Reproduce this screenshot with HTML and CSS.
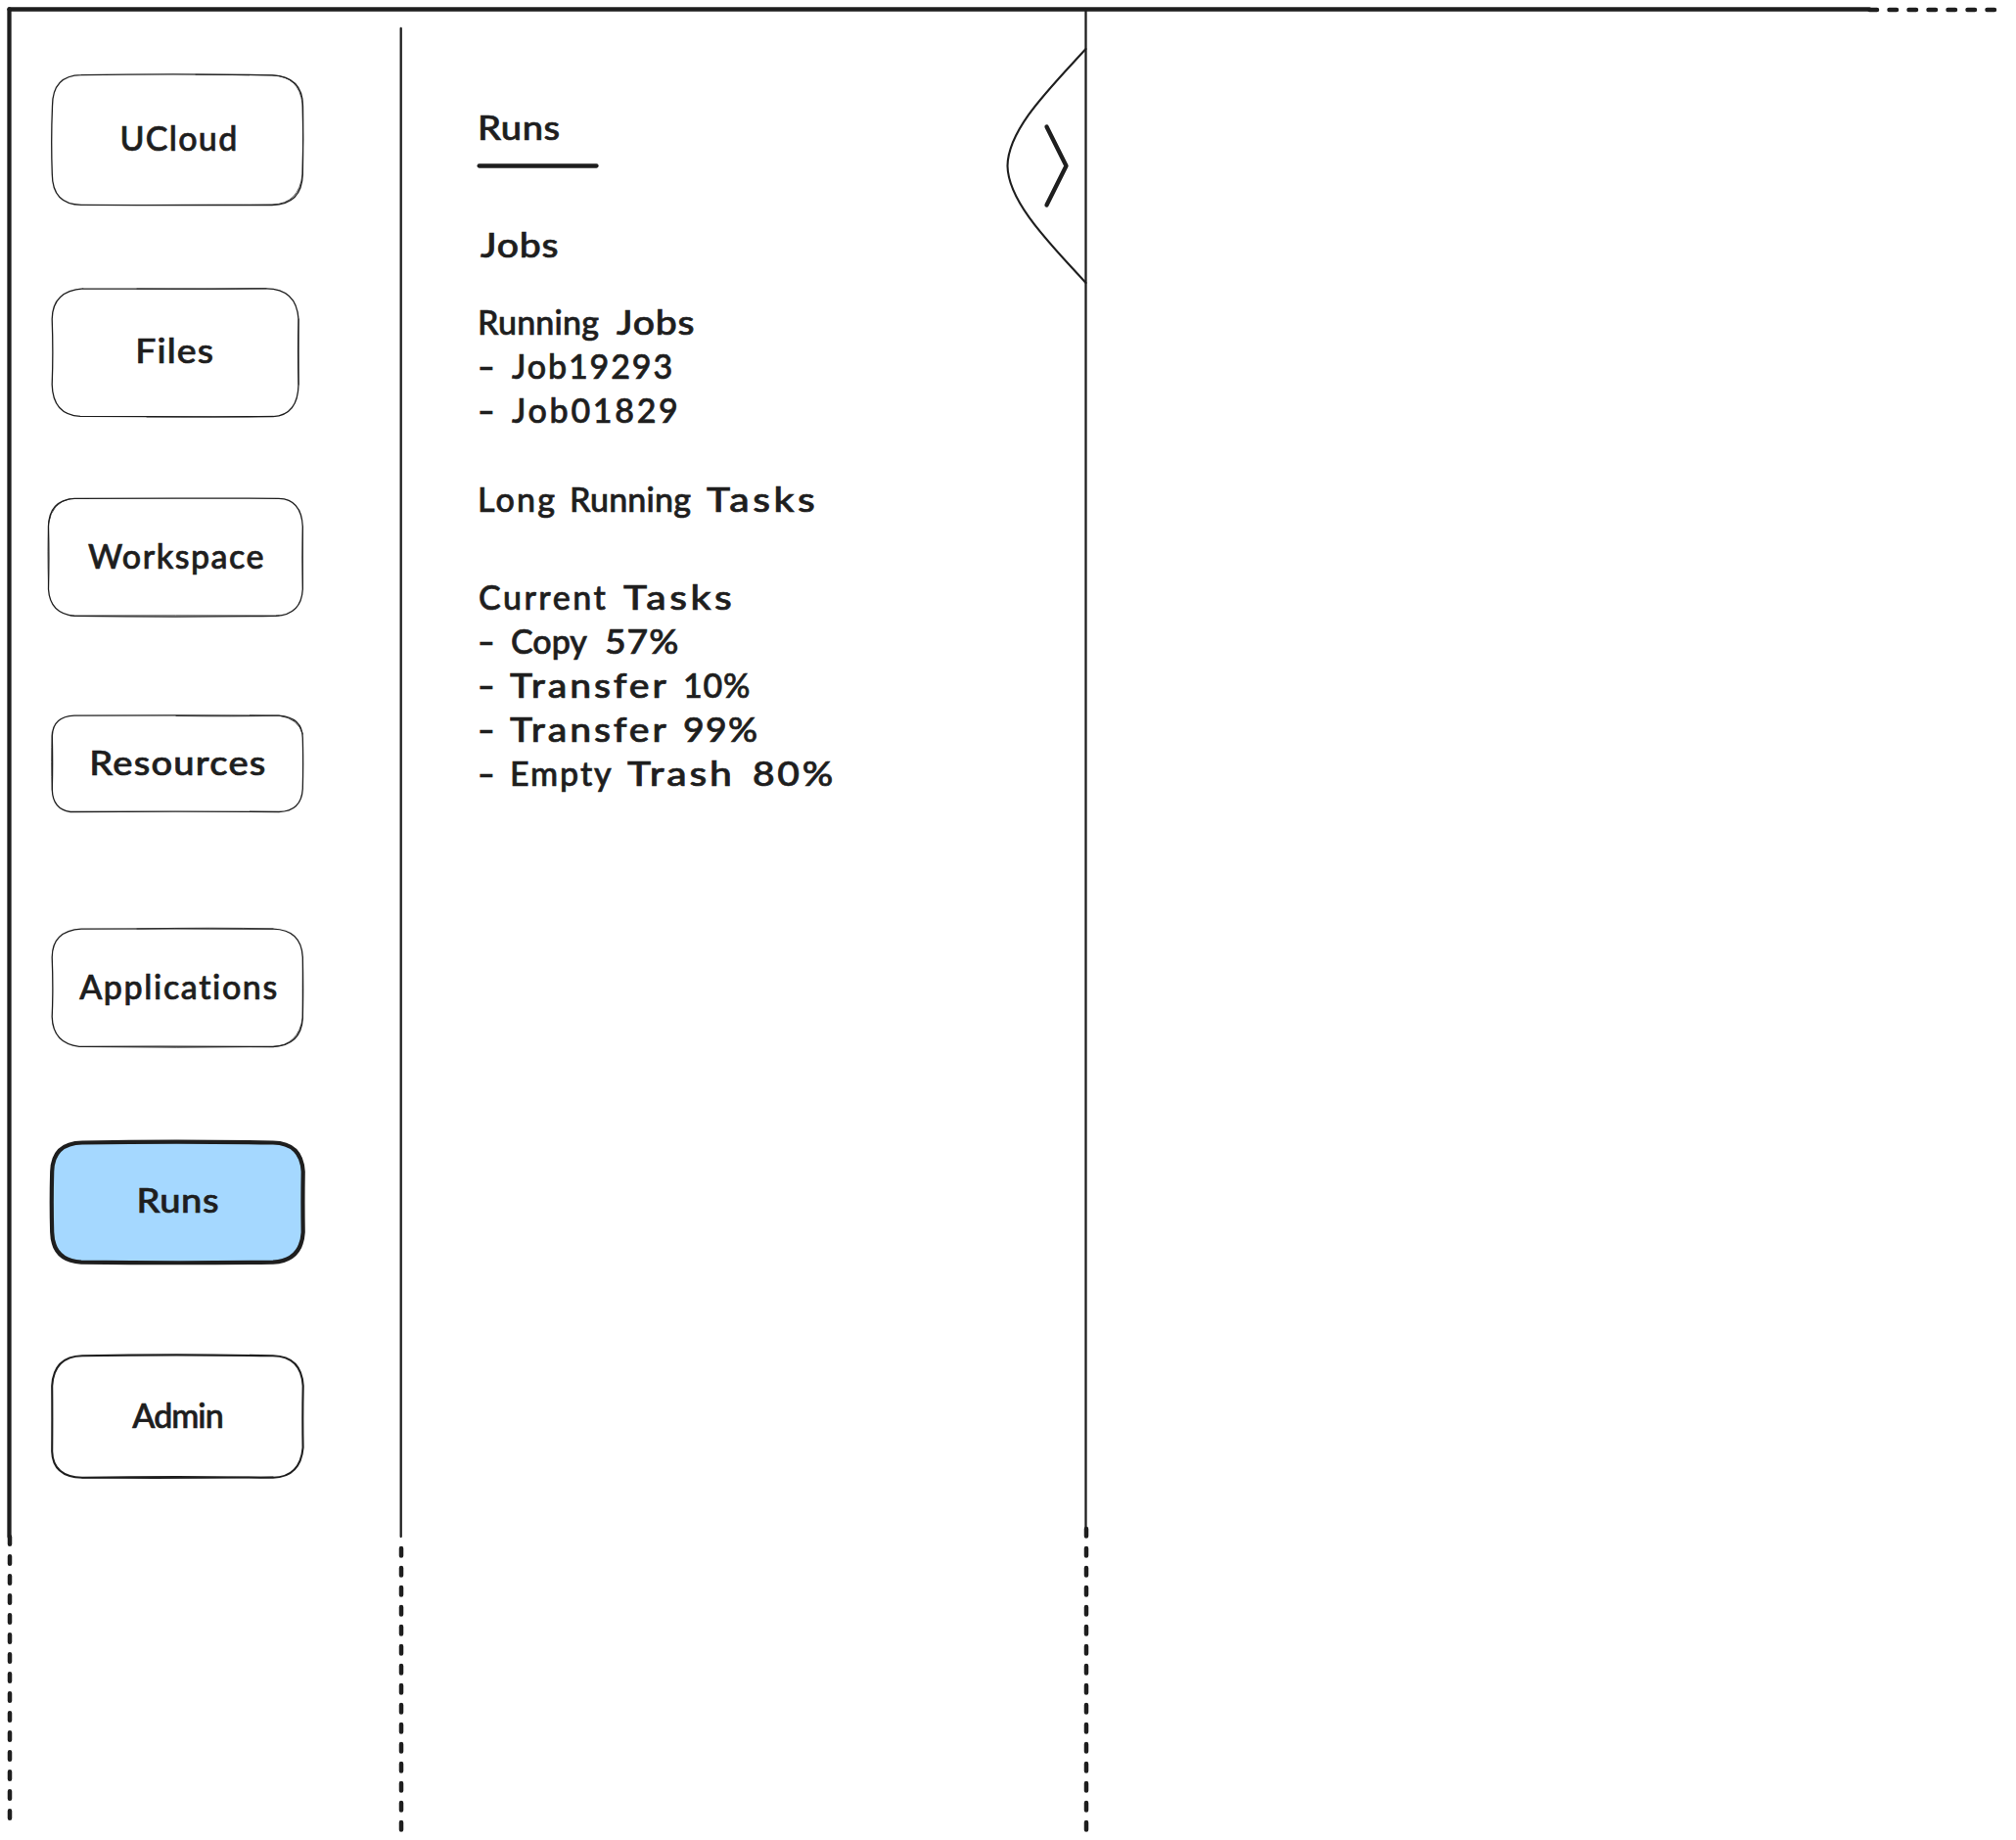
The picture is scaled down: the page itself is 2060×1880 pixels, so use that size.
FILE: index.html
```html
<!DOCTYPE html>
<html lang="en">
<head>
<meta charset="utf-8">
<title>UCloud – Runs</title>
<link rel="stylesheet" href="styles.css">
</head>
<body>
<div class="board">
  <svg class="top-edge ink" viewBox="0 0 2060 14" aria-hidden="true">
    <path class="bold" d="M9.5 9.5H1910"/>
    <path class="dashed" d="M1910.5 10H2040"/>
  </svg>
  <div class="columns">
    <svg class="left-edge ink" viewBox="0 14 14 1866" aria-hidden="true">
      <path class="bold" d="M9.5 9.5V1570"/>
      <path class="dashed" d="M10 1570.3V1860"/>
    </svg>

    <nav class="nav">
      <a class="item ucloud">
        <svg class="box ink" viewBox="53 76 257 134" aria-hidden="true">
          <path d="M83 76.7Q180 75.2 278 76.8Q309.5 78 309.5 108.500Q310 143 309.300 178Q308.500 209 278 209.500Q180 210 83 209.300Q53.500 209 53.300 178Q52 143 53.500 108.500Q53.500 77 83 76.700"/>
          <path class="echo" d="M200 76.200Q240 76.500 278 76.800Q306 78 309 106Q310.300 143 309 178Q306 208 278 209.200Q220 209 150 209.500"/>
        </svg>
        <span class="label">UCloud</span>
      </a>
      <a class="item files">
        <svg class="box ink" viewBox="53 294 252 132" aria-hidden="true">
          <path d="M85 294.800Q180 295.300 272 294.800Q303 295 305 326Q304.200 360 305 393Q304.500 424 279 425.700Q180 426 82 425.300Q54 424 53.200 393Q54.500 360 53.200 326Q53.500 297 85 294.800"/>
          <path class="echo" d="M140 295Q210 295.600 272 294.800M305.200 326V393M150 426Q220 426.300 279 425.300"/>
        </svg>
        <span class="label">Files</span>
      </a>
      <a class="item workspace">
        <svg class="box ink" viewBox="49 509 261 121" aria-hidden="true">
          <path d="M76 509.300Q180 508.800 285 509.300Q308 510 309.300 538Q309 570 309.300 602Q308 628 282 629.300Q180 630.800 76 629.300Q51 627 49.500 602Q50.300 570 49.500 538Q50 511 76 509.300"/>
          <path class="echo" d="M49.500 600Q48.500 560 49.500 535Q53 513 72 509.500M72 629Q180 628.700 285 629M309.500 538Q308.500 570 309.500 602"/>
        </svg>
        <span class="label">Workspace</span>
      </a>
      <a class="item resources">
        <svg class="box ink" viewBox="53 731 257 99" aria-hidden="true">
          <path d="M76 731.200Q180 730.500 285 731.200Q309 733 309.300 754Q310 780 309.300 806Q308 829 285 829.500Q180 828.600 72 829.500Q54 827 53.300 807Q54 780 53.300 752Q54 732 76 731.200"/>
          <path class="echo" d="M180 731.500Q240 732.300 285 731.200Q305 734 309.300 750M53.300 807Q51.900 780 53.300 748"/>
        </svg>
        <span class="label">Resources</span>
      </a>
      <a class="item applications">
        <svg class="box ink" viewBox="53 949 257 121" aria-hidden="true">
          <path d="M83 949.200Q180 948.500 279 949.200Q308 950 309.300 978Q310 1010 309.300 1040Q308 1068 279 1069.500Q180 1068.800 81 1069.300Q54 1066 53.200 1039Q54.500 1010 53.200 978Q53.500 951 83 949.200"/>
          <path class="echo" d="M140 949Q220 947.400 279 949M309.500 978Q309 1010 309.300 1040Q305 1068 279 1069.500Q180 1071 85 1069.500"/>
        </svg>
        <span class="label">Applications</span>
      </a>
      <a class="item runs active" aria-current="page">
        <svg class="box ink" viewBox="53 1166 258 125" aria-hidden="true">
          <path d="M84 1167.500Q180 1165.800 279 1167.500Q308 1168 309.700 1197Q309.200 1229 309.700 1259Q308 1288 279 1289.700Q180 1290.800 83 1289.600Q54 1288 53.200 1259Q52.300 1229 53.200 1197Q54 1168 84 1167.500Z"/>
        </svg>
        <span class="label">Runs</span>
      </a>
      <a class="item admin">
        <svg class="box ink" viewBox="53 1385 257 125" aria-hidden="true">
          <path d="M84 1385.300Q180 1383.500 279 1385.300Q308 1386 309.700 1416Q309 1448 309.600 1479Q307 1509 279 1509.800Q180 1508.300 84 1509.800Q54 1509 53.200 1483Q53.500 1448 53.200 1416Q55 1386 84 1385.300Z"/>
          <path class="echo" d="M84 1509.800Q180 1510.800 279 1509.200"/>
        </svg>
        <span class="label">Admin</span>
      </a>
    </nav>

    <svg class="divider ink" viewBox="404 14 12 1866" aria-hidden="true">
      <path d="M409.700 29V1570"/>
      <path class="dashed" d="M410 1582V1872"/>
    </svg>

    <main class="panel">
      <h1 class="line title"><span class="runs-word">Runs</span></h1>
      <svg class="underline ink" viewBox="488 166 126 6" aria-hidden="true"><path class="bold" d="M489.600 169.500H609.500"/></svg>

      <h2 class="line jobs"><span class="jobs-word">Jobs</span></h2>

      <section class="group running-jobs">
        <h3 class="line heading"><span class="running">Running</span><span class="jobs-word">Jobs</span></h3>
        <div class="line job"><span class="dash">-</span><span class="job-a">Job19293</span></div>
        <div class="line job"><span class="dash">-</span><span class="job-b">Job01829</span></div>
      </section>

      <h2 class="line long-tasks"><span class="long">Long</span><span class="running">Running</span><span class="tasks">Tasks</span></h2>

      <section class="group current-tasks">
        <h3 class="line heading"><span class="current">Current</span><span class="tasks">Tasks</span></h3>
        <div class="line copy"><span class="dash">-</span><span class="copy-word">Copy</span><span class="p57">57%</span></div>
        <div class="line transfer"><span class="dash">-</span><span class="transfer-word">Transfer</span><span class="p10">10%</span></div>
        <div class="line transfer"><span class="dash">-</span><span class="transfer-word">Transfer</span><span class="p99">99%</span></div>
        <div class="line empty"><span class="dash">-</span><span class="empty-word">Empty</span><span class="trash">Trash</span><span class="p80">80%</span></div>
      </section>
    </main>

    <svg class="handle ink" viewBox="1020 14 96 1866" aria-hidden="true">
      <path d="M1109.500 10V1570"/>
      <path class="dashed" d="M1110 1562V1872"/>
      <path class="thin" d="M1109.500 50C1072 91 1030 132 1029.500 169.500C1030 208 1078 254 1109.500 289"/>
      <path class="bold" d="M1069.500 129.500L1089.500 169.500L1069.500 209.500"/>
    </svg>
  </div>
</div>
</body>
</html>
```
FILE: styles.css
```css
* { box-sizing: border-box; }

body {
  margin: 0;
  background: #fff;
  color: #1e1e1e;
  font: 500 34px/45px Lato, "Open Sans", sans-serif;
  -webkit-text-stroke: .7px #1e1e1e;
}

.board {
  width: 2060px;
  height: 1880px;
  overflow: hidden;
}

svg { display: block; overflow: visible; flex: none; }

.ink {
  fill: none;
  stroke: #1e1e1e;
  stroke-width: 2.3;
  stroke-linecap: round;
  stroke-linejoin: round;
}
.ink .bold { stroke-width: 4.3; }
.ink .thin { stroke-width: 2.1; }
.ink .dashed { stroke-width: 4.5; stroke-dasharray: 7.5 12.5; }

.top-edge { width: 2060px; height: 14px; }
.columns { display: flex; height: 1866px; }
.left-edge { width: 14px; height: 1866px; }
.divider { width: 12px; height: 1866px; }
.handle { width: 96px; height: 1866px; }

/* Sidebar */
.nav {
  width: 390px;
  padding: 62px 0 0 39px;
  display: flex;
  flex-direction: column;
  align-items: flex-start;
}
.item { display: grid; width: 257px; }
.box, .label { grid-area: 1 / 1; }
.box { width: 100%; height: 100%; stroke-width: 1.3; }
.box .echo { stroke-width: .8; }
.label { place-self: center; padding-bottom: 5px; }

.ucloud { height: 134px; }
.files { width: 252px; height: 132px; margin-top: 84px; }
.workspace { width: 261px; height: 121px; margin: 83px 0 0 -4px; }
.resources { height: 99px; margin-top: 101px; }
.applications { height: 121px; margin-top: 119px; }
.runs { width: 258px; height: 125px; margin-top: 96px; }
.admin { height: 125px; margin-top: 94px; }

.ucloud .label { letter-spacing: 1.3px; padding-left: 3px; }
.files .label { letter-spacing: 1px; transform: scaleX(1.1); }
.workspace .label { letter-spacing: 1.5px; padding-left: 2px; }
.resources .label { letter-spacing: 1.1px; transform: scaleX(1.12); }
.applications .label { letter-spacing: 1.6px; padding-left: 3px; }
.runs .label { letter-spacing: .5px; transform: scaleX(1.12); padding-bottom: 7px; }
.admin .label { letter-spacing: -1px; }

.active .box { fill: #a5d8ff; stroke-width: 4.2; }
.admin .box { stroke-width: 2.1; }
.admin .echo { stroke-width: 1.6; }

/* Content panel */
.panel { width: 604px; padding: 93px 0 0 72px; }
h1, h2, h3 { margin: 0; font: inherit; }
.underline { width: 126px; height: 6px; margin-top: 14px; }

.line { display: grid; height: 45px; white-space: nowrap; }
.line span { transform-origin: 0 50%; }
.jobs { margin-top: 55px; padding-left: 3px; }
.running-jobs { margin-top: 34px; }
.running-jobs .heading { grid-template-columns: 142px auto; }
.job { grid-template-columns: 35px auto; }
.long-tasks { grid-template-columns: 94px 140px auto; margin-top: 46px; }
.current-tasks { margin-top: 55px; }
.current-tasks .heading { grid-template-columns: 149px auto; }
.copy { grid-template-columns: 34px 96px auto; }
.transfer { grid-template-columns: 33px 177px auto; }
.empty { grid-template-columns: 33px 120px 128px auto; }

/* Tracking and stretch per word */
.dash { transform: scaleX(1.4); }
.runs-word { letter-spacing: .5px; transform: scaleX(1.12); }
.running { letter-spacing: .2px; }
.jobs-word { letter-spacing: .7px; transform: scaleX(1.15); }
.job-a { letter-spacing: 1.9px; }
.job-b { letter-spacing: 2.7px; }
.long { letter-spacing: 2.2px; }
.current { letter-spacing: 2.5px; padding-left: 1px; }
.tasks { letter-spacing: 3px; transform: scaleX(1.2); }
.copy-word { letter-spacing: 0; }
.transfer-word { letter-spacing: 2.5px; transform: scaleX(1.15); }
.empty-word { letter-spacing: 1.9px; }
.trash { letter-spacing: 2.4px; transform: scaleX(1.2); }
.p57 { letter-spacing: .8px; transform: scaleX(1.1); }
.p10 { letter-spacing: .8px; }
.p99 { letter-spacing: 1.2px; transform: scaleX(1.1); }
.p80 { letter-spacing: 2.3px; transform: scaleX(1.15); }
```
